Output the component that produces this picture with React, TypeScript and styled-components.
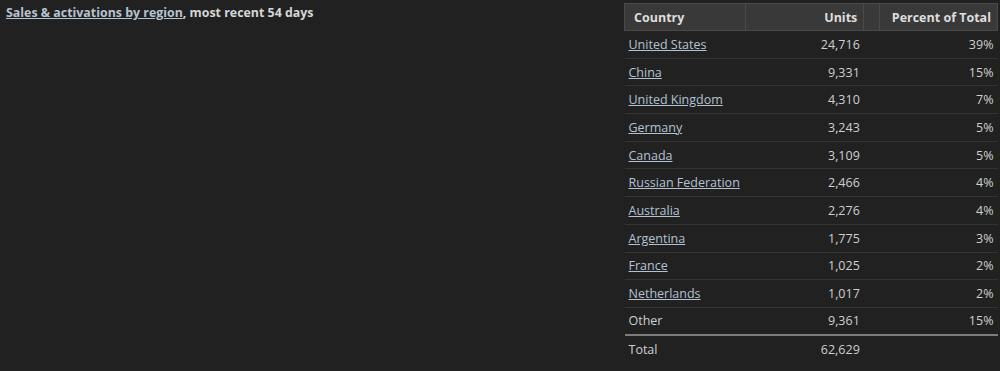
import React from 'react'
import styled, { createGlobalStyle } from 'styled-components'

interface RegionRow {
  country: string
  units: string
  percent: string
  link?: boolean
}

const rows: RegionRow[] = [
  { country: 'United States', units: '24,716', percent: '39%', link: true },
  { country: 'China', units: '9,331', percent: '15%', link: true },
  { country: 'United Kingdom', units: '4,310', percent: '7%', link: true },
  { country: 'Germany', units: '3,243', percent: '5%', link: true },
  { country: 'Canada', units: '3,109', percent: '5%', link: true },
  { country: 'Russian Federation', units: '2,466', percent: '4%', link: true },
  { country: 'Australia', units: '2,276', percent: '4%', link: true },
  { country: 'Argentina', units: '1,775', percent: '3%', link: true },
  { country: 'France', units: '1,025', percent: '2%', link: true },
  { country: 'Netherlands', units: '1,017', percent: '2%', link: true },
  { country: 'Other', units: '9,361', percent: '15%' },
]

const GlobalStyle = createGlobalStyle`
  html, body {
    margin: 0;
    padding: 0;
    background: #212121;
  }
  body {
    font-family: 'Open Sans', 'Liberation Sans', sans-serif;
    color: #c6c6c6;
  }
`

const Page = styled.div`
  display: flex;
  justify-content: space-between;
  align-items: flex-start;
  width: 1000px;
  height: 371px;
  padding: 3px 2px 0 6px;
  box-sizing: border-box;
  background: #212121;
`

const Heading = styled.div`
  font-size: 12.4px;
  font-weight: 700;
  color: #d6d6d6;
  line-height: 20px;
  a {
    color: #b6c3cf;
    text-decoration: underline;
  }
`

const Table = styled.table`
  width: 374px;
  border-collapse: collapse;
  font-size: 12.5px;
  td, th {
    height: 27.7px;
    padding: 0 4px;
    box-sizing: border-box;
  }
`

const HeadCell = styled.th<{ align?: 'left' | 'right' }>`
  background: #393939;
  border: 1px solid #4a4a4a;
  color: #dedede;
  font-weight: 700;
  text-align: ${(p) => p.align || 'left'};
  height: 27px !important;
  padding: 0 6px 0 9px !important;
`

const Row = styled.tr<{ total?: boolean }>`
  border-bottom: 1px solid #343434;
  ${(p) => (p.total ? 'border-top: 2px solid #7d7d7d; border-bottom: none;' : '')}
`

const Cell = styled.td<{ align?: 'left' | 'right' }>`
  text-align: ${(p) => p.align || 'left'};
  color: #cfcfcf;
  a {
    color: #b3c2d1;
    text-decoration: underline;
  }
`

const App: React.FC = () => {
  return (
    <Page>
      <GlobalStyle />
      <Heading>
        <a href="#">Sales &amp; activations by region</a>, most recent 54 days
      </Heading>
      <Table>
        <colgroup>
          <col style={{ width: 121 }} />
          <col style={{ width: 119 }} />
          <col style={{ width: 16 }} />
          <col style={{ width: 118 }} />
        </colgroup>
        <thead>
          <tr>
            <HeadCell>Country</HeadCell>
            <HeadCell align="right">Units</HeadCell>
            <HeadCell />
            <HeadCell align="right">Percent of Total</HeadCell>
          </tr>
        </thead>
        <tbody>
          {rows.map((r) => (
            <Row key={r.country}>
              <Cell>{r.link ? <a href="#">{r.country}</a> : r.country}</Cell>
              <Cell align="right">{r.units}</Cell>
              <Cell />
              <Cell align="right">{r.percent}</Cell>
            </Row>
          ))}
          <Row total>
            <Cell>Total</Cell>
            <Cell align="right">62,629</Cell>
            <Cell />
            <Cell />
          </Row>
        </tbody>
      </Table>
    </Page>
  )
}

export default App
